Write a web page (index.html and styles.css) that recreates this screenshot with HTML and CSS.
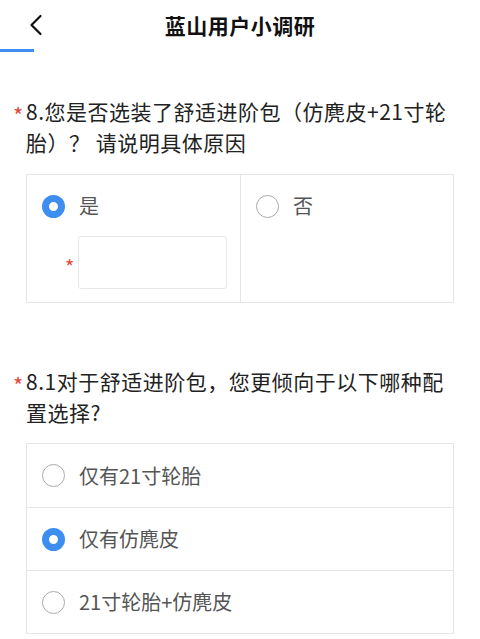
FILE: index.html
```html
<!DOCTYPE html>
<html lang="zh-CN">
<head>
    <meta charset="UTF-8">
    <meta name="viewport" content="width=device-width, initial-scale=1.0">
    <title>蓝山用户小调研</title>
    <link rel="stylesheet" href="styles.css">
</head>
<body>

    <header class="nav">
        <a class="nav_back" href="#">
            <svg width="14" height="22" viewBox="0 0 14 22">
                <path d="M11.5 2 L2.5 11 L11.5 20" fill="none" stroke="#111" stroke-width="2.2" stroke-linecap="round" stroke-linejoin="round"/>
            </svg>
        </a>
        <h1 class="nav_title">蓝山用户小调研</h1>
        <span></span>
    </header>
    <div class="progress"></div>

    <section class="question q1">
        <h2 class="q_title"><span class="req">*</span>8.您是否选装了舒适进阶包（仿麂皮+21寸轮胎）？ 请说明具体原因</h2>
        <div class="choice_grid">
            <div class="cell">
                <label class="opt">
                    <span class="radio on"></span>
                    <span class="opt_text">是</span>
                </label>
                <div class="reason">
                    <span class="req_small">*</span>
                    <input class="reason_input" type="text">
                </div>
            </div>
            <div class="cell">
                <label class="opt">
                    <span class="radio"></span>
                    <span class="opt_text">否</span>
                </label>
            </div>
        </div>
    </section>

    <section class="question q2">
        <h2 class="q_title"><span class="req">*</span>8.1对于舒适进阶包，您更倾向于以下哪种配置选择?</h2>
        <ul class="choice_list">
            <li class="opt row">
                <span class="radio"></span>
                <span class="opt_text">仅有21寸轮胎</span>
            </li>
            <li class="opt row">
                <span class="radio on"></span>
                <span class="opt_text">仅有仿麂皮</span>
            </li>
            <li class="opt row">
                <span class="radio"></span>
                <span class="opt_text">21寸轮胎+仿麂皮</span>
            </li>
        </ul>
    </section>

</body>
</html>
```

FILE: styles.css
```css
* {
    padding: 0;
    margin: 0;
    box-sizing: border-box;
    font-family: 'Noto Sans CJK SC', 'Noto Sans', sans-serif;
}
ul, ol {
    list-style-type: none;
}
a {
    text-decoration: none;
}
body {
    width: 480px;
    background: #fff;
    color: #222;
}
.nav {
    height: 49px;
    display: grid;
    grid-template-columns: 1fr auto 1fr;
    align-items: center;
}
.nav_back {
    display: flex;
    align-items: center;
    padding-left: 29px;
    height: 100%;
}
.nav_title {
    font-size: 21px;
    font-weight: bold;
    color: #111;
    letter-spacing: 0.5px;
}
.progress {
    width: 34px;
    height: 3px;
    background: #3d8ef0;
}
.question {
    padding: 0 26px;
}
.q1 {
    margin-top: 44px;
}
.q2 {
    margin-top: 63px;
}
.q_title {
    font-size: 21px;
    font-weight: normal;
    line-height: 31px;
    letter-spacing: 0.5px;
    color: #222;
    padding-right: 4px;
}
.req {
    display: inline-block;
    width: 13px;
    margin-left: -13px;
    padding-top: 5px;
    color: #e5483d;
    font-size: 22px;
    line-height: 26px;
    vertical-align: top;
}
.choice_grid {
    display: grid;
    grid-template-columns: 213px 1fr;
    margin-top: 16px;
    border: 1px solid #e6e6e6;
}
.cell {
    padding: 19px 0 13px 15px;
}
.cell + .cell {
    border-left: 1px solid #e6e6e6;
}
.opt {
    display: flex;
    align-items: center;
    gap: 14px;
}
.opt_text {
    font-size: 20px;
    color: #555;
    line-height: 24px;
}
.radio {
    flex: none;
    width: 23px;
    height: 23px;
    border-radius: 50%;
    border: 1.5px solid #aaa;
    background: #fff;
}
.radio.on {
    border: 7px solid #3d8ef0;
}
.reason {
    display: flex;
    align-items: center;
    gap: 4px;
    margin-top: 18px;
    padding-left: 23px;
}
.req_small {
    width: 9px;
    padding-top: 8px;
    color: #e5483d;
    font-size: 20px;
    line-height: 20px;
}
.reason_input {
    width: 149px;
    height: 53px;
    border: 1.5px solid #e8e8e8;
    border-radius: 3px;
    outline: 0;
}
.choice_list {
    margin-top: 15px;
    border: 1px solid #e6e6e6;
}
.row {
    height: 63px;
    padding-left: 15px;
}
.row + .row {
    border-top: 1px solid #e6e6e6;
}
```
